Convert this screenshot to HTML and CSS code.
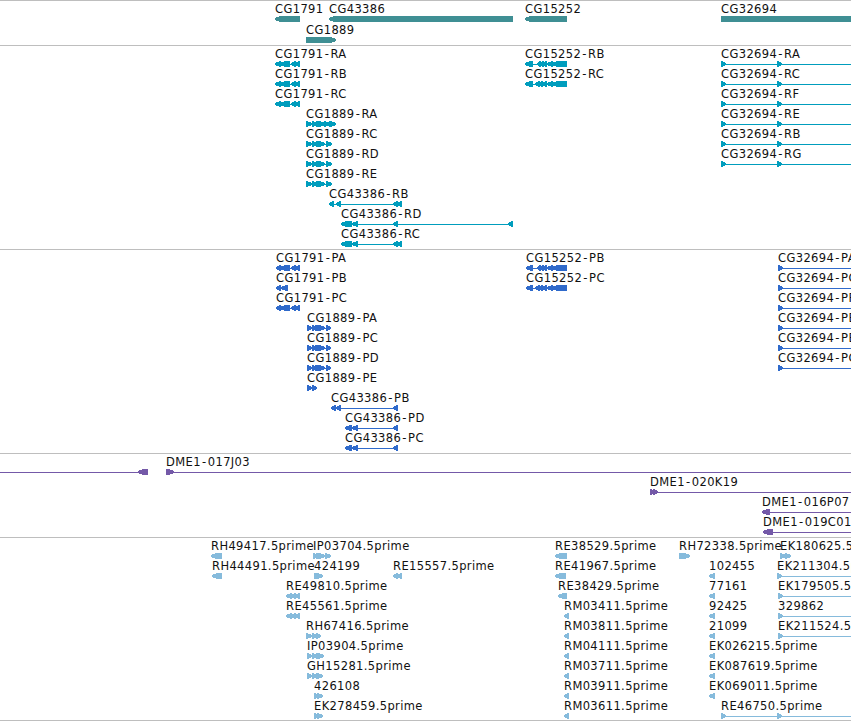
FILE: index.html
```html
<!DOCTYPE html>
<html lang="en">
<head>
    <meta charset="UTF-8">
    <meta name="viewport" content="width=device-width, initial-scale=1.0">
    <title>Genome tracks</title>
    <link rel="stylesheet" href="styles.css">
</head>
<body>
    <main class="browser">
        <section class="track genes"></section>
        <section class="track transcripts"></section>
        <section class="track proteins"></section>
        <section class="track clones"></section>
        <section class="track ests"></section>
    </main>
<script src="tracks.js"></script>
</body>
</html>
```

FILE: styles.css
```css
*{
    margin:0;
    padding:0;
    box-sizing: border-box;
}
body{
    background-color: white;
    overflow: hidden;
}
.browser{
    display:flex;
    flex-direction: column;
    width:851px;
    border-bottom:1px solid #bebebe;
}
.track{
    display:flex;
    flex-direction: column;
    border-top:1px solid #bebebe;
    padding-bottom:3px;
}
.row{
    display:block;
    width:100%;
    height:20px;
    overflow: visible;
}
.label{
    font-family: "DejaVu Sans", sans-serif;
    font-size: 11.5px;
    letter-spacing: 0.37px;
    fill:#111;
}
.shape{
    shape-rendering: crispEdges;
}
.genes{
    padding-bottom:2px;
    color:#3f8f94;
}
.genes .row{
    height:21px;
}
.transcripts{
    color:#009dbd;
}
.proteins{
    color:#2f6acb;
}
.clones{
    color:#7459a8;
}
.ests{
    padding-bottom:2px;
    color:#86bbdc;
}
```

FILE: tracks.js
```javascript
const SVG="http://www.w3.org/2000/svg";
const EDGE=851;

// feature: [label, label x, strand, line end, exons]
const rna1791=[[275,281],[280,290],[291,296],[295,300]];
const pep1791=[[276,281],[280,290],[291,296],[295,300]];
const rna1889=[[306,312],[312,317],[316,325],[326,332]];
const pep1889=[[307,312],[312,316],[315,325],[326,331]];
const tail15252=[[547,553],[552,567]];
const rna32694=[[721,726],[777,782]];

const r32694=name=>["CG32694-"+name,721,"+",EDGE,rna32694];
const p32694=name=>["CG32694-"+name,778,"+",EDGE,[[778,783]]];
const rm=name=>[name+".5prime",564,"-",569,[[564,569]]];
const small=name=>[name,709,"-",715,[[709,715]]];
const ek=(name,x)=>[name,x,"+",EDGE,[[x,x+5]]];

const tracks={
    genes:[
        [["CG1791",275,"-",300,[[275,300]]],["CG43386",329,"-",513,[[329,513]]],["CG15252",525,"-",567,[[525,567]]],["CG32694",721,"+",EDGE,[[721,870]]]],
        [["CG1889",306,"+",336,[[306,336]]]]
    ],
    transcripts:[
        [["CG1791-RA",275,"-",300,rna1791],["CG15252-RB",525,"-",567,[[525,533],[537,541],[540,544],[543,547],...tail15252]],r32694("RA")],
        [["CG1791-RB",275,"-",300,rna1791],["CG15252-RC",525,"-",567,[[525,533],[535,540],[539,543],[542,547],...tail15252]],r32694("RC")],
        [["CG1791-RC",275,"-",300,rna1791],r32694("RF")],
        [["CG1889-RA",306,"+",336,[[306,312],[312,317],[316,325],[324,330],[329,336]]],r32694("RE")],
        [["CG1889-RC",306,"+",332,rna1889],r32694("RB")],
        [["CG1889-RD",306,"+",332,rna1889],r32694("RG")],
        [["CG1889-RE",306,"+",332,rna1889]],
        [["CG43386-RB",329,"-",402,[[329,334],[336,341],[393,398],[397,402]]]],
        [["CG43386-RD",341,"-",513,[[341,352],[352,358],[393,398],[508,513]]]],
        [["CG43386-RC",341,"-",402,[[341,352],[352,358],[393,398],[397,402]]]]
    ],
    proteins:[
        [["CG1791-PA",276,"-",300,pep1791],["CG15252-PB",526,"-",567,[[526,533],[537,541],[540,544],[543,547],...tail15252]],p32694("PA")],
        [["CG1791-PB",276,"-",288,[[276,281],[281,288]]],["CG15252-PC",526,"-",567,[[526,533],[535,540],[539,543],[542,547],...tail15252]],p32694("PC")],
        [["CG1791-PC",276,"-",300,pep1791],p32694("PF")],
        [["CG1889-PA",307,"+",331,pep1889],p32694("PE")],
        [["CG1889-PC",307,"+",331,pep1889],p32694("PB")],
        [["CG1889-PD",307,"+",331,pep1889],p32694("PG")],
        [["CG1889-PE",307,"+",317,[[307,312],[312,317]]]],
        [["CG43386-PB",331,"-",398,[[331,336],[336,341],[393,398]]]],
        [["CG43386-PD",345,"-",398,[[345,352],[352,358],[393,398]]]],
        [["CG43386-PC",345,"-",398,[[345,352],[352,358],[393,398]]]]
    ],
    clones:[
        [["",0,"-",148,[[138,148]]],["DME1-017J03",166,"+",EDGE,[[166,174]]]],
        [["DME1-020K19",650,"+",EDGE,[[650,655],[653,658]]]],
        [["DME1-016P07",762,"-",EDGE,[[762,770]]]],
        [["DME1-019C01",763,"-",EDGE,[[763,773]]]]
    ],
    ests:[
        [["RH49417.5prime",211,"-",222,[[211,222]]],["IP03704.5prime",313,"+",331,[[313,318],[316,325],[325,331]]],["RE38529.5prime",555,"-",567,[[555,567]]],["RH72338.5prime",679,"+",690,[[679,690]]],["EK180625.5prime",780,"+",791,[[780,786],[785,791]]]],
        [["RH44491.5prime",212,"-",222,[[212,222]]],["424199",314,"+",323,[[314,323]]],["RE15557.5prime",393,"-",402,[[393,398],[397,402]]],["RE41967.5prime",555,"-",566,[[555,566]]],small("102455"),ek("EK211304.5prime",777)],
        [["RE49810.5prime",286,"-",300,[[286,292],[291,296],[295,300]]],["RE38429.5prime",558,"-",567,[[558,567]]],small("77161"),ek("EK179505.5prime",778)],
        [["RE45561.5prime",286,"-",300,[[286,292],[291,296],[295,300]]],rm("RM03411"),small("92425"),ek("329862",778)],
        [["RH67416.5prime",306,"+",321,[[306,312],[312,317],[316,321]]],rm("RM03811"),small("21099"),ek("EK211524.5prime",778)],
        [["IP03904.5prime",307,"+",324,[[307,312],[312,317],[316,324]]],rm("RM04111"),small("EK026215.5prime")],
        [["GH15281.5prime",307,"+",323,[[307,312],[312,317],[316,323]]],rm("RM03711"),small("EK087619.5prime")],
        [["426108",314,"+",323,[[314,319],[317,323]]],rm("RM03911"),small("EK069011.5prime")],
        [["EK278459.5prime",314,"+",323,[[314,319],[317,323]]],rm("RM03611"),["RE46750.5prime",721,"+",EDGE,rna32694]]
    ]
};

function add(parent,name,attrs){
    const el=document.createElementNS(SVG,name);
    for(const key in attrs) el.setAttribute(key,attrs[key]);
    parent.appendChild(el);
    return el;
}

// block with a blunt pointed end in the direction of the strand
function exonPoints(a,b,strand){
    const tip=Math.min(5,b-a-1);
    if(strand==="-") return `${b},15 ${a+tip},15 ${a},17 ${a},19 ${a+tip},21 ${b},21`;
    return `${a},15 ${b-tip},15 ${b},17 ${b},19 ${b-tip},21 ${a},21`;
}

// a little air on both sides of the hyphen
function spacing(label){
    return [...label].map((c,i)=>c==="-"||label[i-1]==="-"?1.2:0).join(" ");
}

for(const name in tracks){
    const section=document.querySelector("."+name);
    tracks[name].forEach(features=>{
        const row=add(section,"svg",{class:"row"});
        features.forEach(([label,x,strand,end,exons])=>{
            add(row,"rect",{class:"shape",x:x,y:18,width:end-x,height:1,fill:"currentColor"});
            exons.forEach(([a,b])=>{
                add(row,"polygon",{class:"shape",points:exonPoints(a,b,strand),fill:"currentColor"});
            });
            if(label) add(row,"text",{class:"label",x:x,y:12,dx:spacing(label)}).textContent=label;
        });
    });
}
```
